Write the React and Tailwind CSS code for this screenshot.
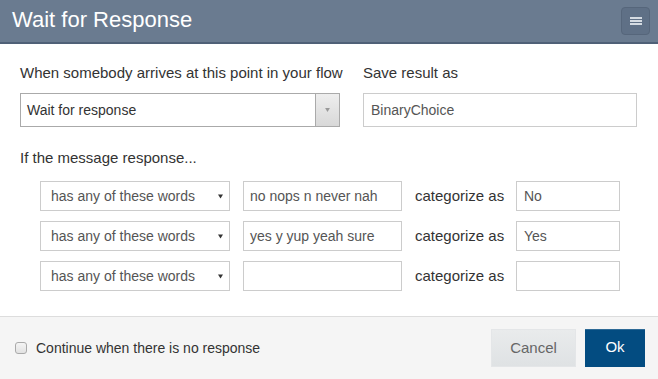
import React from 'react';

const rules = [
  { words: 'no nops n never nah', cat: 'No' },
  { words: 'yes y yup yeah sure', cat: 'Yes' },
  { words: '', cat: '' },
];

function Caret({ className, w = 6, h = 5 }) {
  return (
    <svg width={w} height={h} viewBox="0 0 6 5" className={className}>
      <path d="M0 0h6L3 5z" fill="currentColor" />
    </svg>
  );
}

export default function App() {
  return (
    <div className="w-[658px] h-[379px] bg-white flex flex-col text-[#333] font-['Liberation_Sans',Arial,sans-serif] overflow-hidden">
      {/* header */}
      <div className="h-[44px] shrink-0 bg-[#6a7b90] border-b-2 border-[#4f6077] flex items-center justify-between pl-3 pr-2">
        <h1 className="text-[22px] text-white leading-none -mt-[3px]">Wait for Response</h1>
        <button className="w-[29px] h-[28px] rounded-[4px] bg-[#5f7086] border border-[#56667b] flex flex-col items-center justify-center gap-[1px] -mt-[1px]">
          <span className="block w-[12px] h-[2px] bg-[#d5dbe2]" />
          <span className="block w-[12px] h-[2px] bg-[#d5dbe2]" />
          <span className="block w-[12px] h-[2px] bg-[#d5dbe2]" />
        </button>
      </div>

      {/* body */}
      <div className="flex-1 px-5 pt-[20px]">
        <div className="flex gap-[23px]">
          <div className="w-[320px]">
            <div className="text-[15px] leading-[18px] h-[18px] whitespace-nowrap">When somebody arrives at this point in your flow</div>
            <div className="mt-[11px] h-[34px] border border-[#aaa] flex">
              <div className="flex-1 flex items-center pl-[6px] text-[14px]">Wait for response</div>
              <div className="w-[24px] border-l border-[#aaa] bg-gradient-to-b from-[#eee] to-[#d8d8d8] flex items-center justify-center text-[#999]">
                <Caret w={5} h={4} />
              </div>
            </div>
          </div>
          <div className="w-[274px]">
            <div className="text-[15px] leading-[18px] h-[18px]">Save result as</div>
            <div className="mt-[11px] h-[34px] border border-[#ccc] flex items-center pl-[7px] text-[14px] text-[#555]">BinaryChoice</div>
          </div>
        </div>

        <div className="mt-[22px] text-[15px] leading-[18px]">If the message response...</div>

        <div className="mt-[14px] pl-5 flex flex-col gap-[10px]">
          {rules.map((r, i) => (
            <div key={i} className="flex items-center h-[30px]">
              <div className="w-[190px] h-[30px] border border-[#ccc] flex items-center justify-between pl-[10px] pr-[6px] text-[14px] text-[#555]">
                <span>has any of these words</span>
                <Caret className="text-[#333]" w={5} h={5} />
              </div>
              <div className="ml-[13px] w-[159px] h-[30px] border border-[#ccc] flex items-center pl-[6px] text-[14px] text-[#555]">{r.words}</div>
              <div className="ml-[13px] w-[101px] text-[15px] text-[#333]">categorize as</div>
              <div className="w-[104px] h-[30px] border border-[#ccc] flex items-center pl-[7px] text-[14px] text-[#555]">{r.cat}</div>
            </div>
          ))}
        </div>
      </div>

      {/* footer */}
      <div className="h-[63px] shrink-0 bg-[#f5f5f5] border-t border-[#ddd] flex items-center justify-between pl-[15px] pr-[13px]">
        <label className="flex items-center gap-[9px] text-[14px] text-[#333]">
          <span className="w-[12px] h-[12px] rounded-[3px] border border-[#aaa] bg-gradient-to-b from-[#f4f4f4] to-[#e2e2e2]" />
          Continue when there is no response
        </label>
        <div className="flex gap-[9px]">
          <button className="w-[85px] h-[38px] bg-gradient-to-b from-[#e9ebec] to-[#dfe2e4] border border-[#e4e6e8] text-[15px] text-[#666]">Cancel</button>
          <button className="w-[60px] h-[38px] bg-[#034c81] border-t border-[#2e6a96] text-[15px] text-white pb-[2px]">Ok</button>
        </div>
      </div>
    </div>
  );
}
